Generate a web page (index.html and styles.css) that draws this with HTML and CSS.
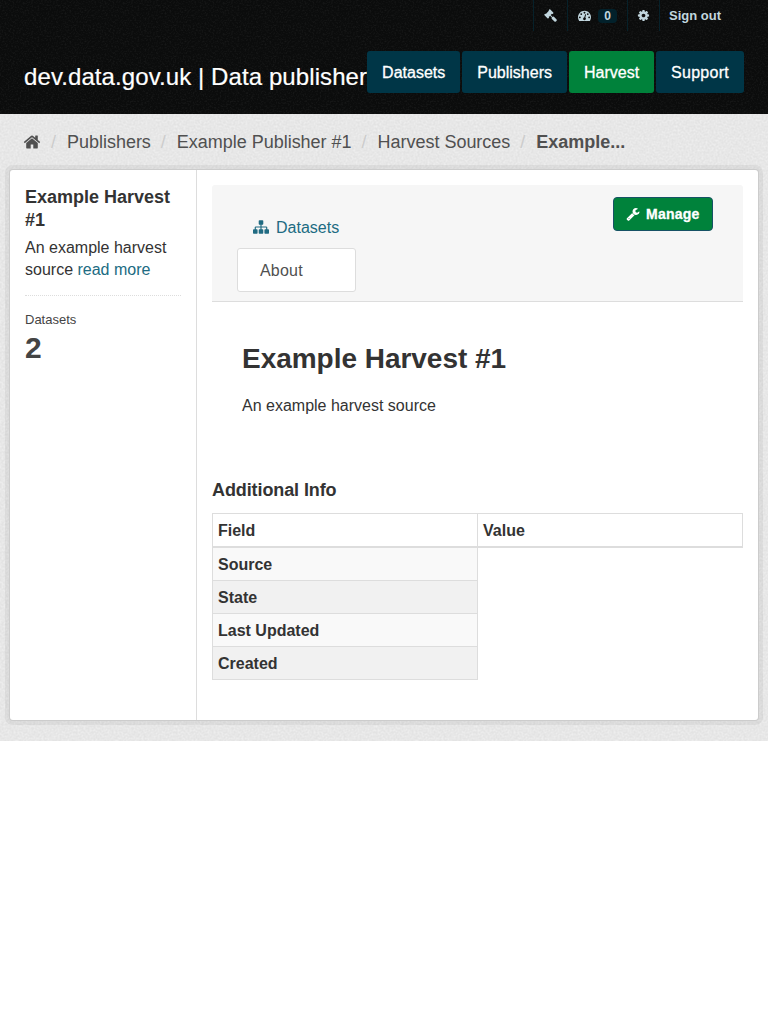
FILE: index.html
```html
<!DOCTYPE html>
<html lang="en">
<head>
<meta charset="utf-8">
<title>Example Harvest #1 - dev.data.gov.uk</title>
<link rel="stylesheet" href="styles.css">
</head>
<body>
<div class="account">
  <ul class="account-list">
    <li><a class="acc-gavel" href="#"><svg class="icon" viewBox="0 0 1792 1792"><path d="M1771 1536q0 53-37 90l-107 108q-39 37-91 37-53 0-90-37l-363-364q-38-36-38-90 0-53 43-96l-256-256-126 126q-14 14-34 14t-34-14q2 2 12.500 12t12.500 13 10 11.500 10 13.500 6 13.500 5.500 16.500 1.500 18q0 38-28 68-3 3-16.500 18t-19 20.500-18.500 16.500-22 15.500-22 9-26 4.500q-40 0-68-28l-408-408q-28-28-28-68 0-13 4.500-26t9-22 15.500-22 16.500-18.500 20.500-19 18-16.500q30-28 68-28 10 0 18 1.500t16.500 5.500 13.500 6 13.500 10 11.500 10 13 12.500 12 12.500q-14-14-14-34t14-34l348-348q14-14 34-14t34 14q-2-2-12.500-12t-12.500-13-10-11.500-10-13.500-6-13.500-5.500-16.500-1.500-18q0-38 28-68 3-3 16.500-18t19-20.500 18.500-16.500 22-15.500 22-9 26-4.500q40 0 68 28l408 408q28 28 28 68 0 13-4.500 26t-9 22-15.500 22-16.500 18.500-20.500 19-18 16.500q-30 28-68 28-10 0-18-1.500t-16.500-5.500-13.500-6-13.500-10-11.500-10-13-12.500-12-12.500q14 14 14 34t-14 34l-126 126 256 256q43-43 96-43 52 0 91 37l363 363q37 39 37 91z"/></svg></a></li>
    <li><a class="acc-dash" href="#"><svg class="icon" viewBox="0 0 1792 1792"><path d="M384 1152q0-53-37.500-90.500t-90.500-37.500-90.500 37.500-37.500 90.500 37.500 90.500 90.500 37.500 90.500-37.500 37.500-90.500zm192-448q0-53-37.500-90.500t-90.500-37.500-90.500 37.500-37.500 90.500 37.500 90.500 90.500 37.500 90.500-37.500 37.500-90.500zm428 481l101-382q6-26-7.500-48.500t-38.500-29.500-48 6.500-30 39.500l-101 382q-60 5-107 43.500t-63 98.500q-20 77 20 146t117 89 146-20 89-117q16-60-6-117t-72-91zm660-33q0-53-37.500-90.500t-90.500-37.500-90.500 37.500-37.500 90.500 37.500 90.500 90.500 37.500 90.500-37.500 37.500-90.500zm-640-640q0-53-37.500-90.500t-90.500-37.500-90.500 37.500-37.500 90.500 37.500 90.500 90.500 37.500 90.500-37.500 37.500-90.500zm448 192q0-53-37.500-90.500t-90.500-37.500-90.500 37.500-37.500 90.500 37.500 90.500 90.500 37.500 90.500-37.500 37.500-90.500zm320 448q0 261-141 483-19 29-54 29h-1402q-35 0-54-29-141-221-141-483 0-182 71-348t191-286 286-191 348-71 348 71 286 191 191 286 71 348z"/></svg><span class="count">0</span></a></li>
    <li><a class="acc-cog" href="#"><svg class="icon" viewBox="0 0 1792 1792"><path d="M1152 896q0-106-75-181t-181-75-181 75-75 181 75 181 181 75 181-75 75-181zm512-109v222q0 12-8 23t-20 13l-185 28q-19 54-39 91 35 50 107 138 10 12 10 25t-9 23q-27 37-99 108t-94 71q-12 0-26-9l-138-108q-44 23-91 38-16 136-29 186-7 28-36 28h-222q-14 0-24.500-8.500t-11.500-21.500l-28-184q-49-16-90-37l-141 107q-10 9-25 9-14 0-25-11-126-114-165-168-7-10-7-23 0-12 8-23 15-21 51-66.500t54-70.500q-27-50-41-99l-183-27q-13-2-21-12.500t-8-23.500v-222q0-12 8-23t19-13l186-28q14-46 39-92-40-57-107-138-10-12-10-24 0-10 9-23 26-36 98.500-107.500t94.500-71.500q13 0 26 10l138 107q44-23 91-38 16-136 29-186 7-28 36-28h222q14 0 24.500 8.500t11.500 21.500l28 184q49 16 90 37l142-107q9-9 24-9 13 0 25 10 129 119 165 170 7 8 7 22 0 12-8 23-15 21-51 66.500t-54 70.500q26 50 41 98l183 28q13 2 21 12.500t8 23.500z"/></svg></a></li>
    <li><a class="acc-out" href="#">Sign out</a></li>
  </ul>
</div>
<header class="masthead">
  <a class="logo" href="#">dev.data.gov.uk | Data publisher</a>
  <nav class="main-nav">
    <a href="#">Datasets</a>
    <a href="#">Publishers</a>
    <a class="active" href="#">Harvest</a>
    <a class="support" href="#">Support</a>
  </nav>
</header>
<main class="main">
  <ol class="breadcrumb">
    <li><a href="#"><svg class="home" viewBox="0 0 1792 1792"><path d="M1472 992v480q0 26-19 45t-45 19h-384v-384h-256v384h-384q-26 0-45-19t-19-45v-480q0-1 .5-3t.5-3l575-474 575 474q1 2 1 6zm223-69l-62 74q-8 9-21 11h-3q-13 0-21-7l-692-577-692 577q-12 8-24 7-13-2-21-11l-62-74q-8-10-7-23.500t11-21.500l719-599q32-26 76-26t76 26l244 204v-195q0-14 9-23t23-9h192q14 0 23 9t9 23v408l219 182q10 8 11 21.500t-7 23.500z"/></svg></a></li>
    <li><a href="#">Publishers</a></li>
    <li><a href="#">Example Publisher #1</a></li>
    <li><a href="#">Harvest Sources</a></li>
    <li class="current"><a href="#">Example...</a></li>
  </ol>
  <div class="wrapper">
    <aside class="secondary">
      <h1 class="side-title">Example Harvest #1</h1>
      <p class="side-text">An example harvest source <a href="#">read more</a></p>
      <dl class="nums"><dt>Datasets</dt><dd>2</dd></dl>
    </aside>
    <div class="primary">
      <header class="page-header">
        <ul class="tabs">
          <li><a href="#"><svg class="icon" viewBox="0 0 1792 1792"><path d="M1792 1248v320q0 40-28 68t-68 28h-320q-40 0-68-28t-28-68v-320q0-40 28-68t68-28h96v-192h-512v192h96q40 0 68 28t28 68v320q0 40-28 68t-68 28h-320q-40 0-68-28t-28-68v-320q0-40 28-68t68-28h96v-192h-512v192h96q40 0 68 28t28 68v320q0 40-28 68t-68 28h-320q-40 0-68-28t-28-68v-320q0-40 28-68t68-28h96v-192q0-52 38-90t90-38h512v-192h-96q-40 0-68-28t-28-68v-320q0-40 28-68t68-28h320q40 0 68 28t28 68v320q0 40-28 68t-68 28h-96v192h512q52 0 90 38t38 90v192h96q40 0 68 28t28 68z"/></svg>Datasets</a></li>
          <li class="active"><a href="#">About</a></li>
        </ul>
        <a class="btn" href="#"><svg class="icon" viewBox="0 0 1792 1792"><path d="M448 1472q0-26-19-45t-45-19-45 19-19 45 19 45 45 19 45-19 19-45zm644-420l-682 682q-37 37-90 37-52 0-91-37l-106-108q-38-36-38-90 0-53 38-91l681-681q39 98 114.500 173.500t173.500 114.500zm634-435q0 39-23 106-47 134-164.500 217.500t-258.500 83.500q-185 0-316.500-131.500t-131.500-316.500 131.500-316.500 316.500-131.500q58 0 121.500 16.500t107.500 46.500q16 11 16 28t-16 28l-293 169v224l193 107q5-3 79-48.500t135.500-81 70.500-35.500q15 0 23.500 10t8.500 25z"/></svg>Manage</a>
      </header>
      <section class="content">
        <h2>Example Harvest #1</h2>
        <p>An example harvest source</p>
      </section>
      <section class="info">
        <h3>Additional Info</h3>
        <table>
          <thead><tr><th>Field</th><th>Value</th></tr></thead>
          <tbody>
            <tr><th>Source</th></tr>
            <tr><th>State</th></tr>
            <tr><th>Last Updated</th></tr>
            <tr><th>Created</th></tr>
          </tbody>
        </table>
      </section>
    </div>
  </div>
</main>
</body>
</html>
```
FILE: styles.css
```css
* { box-sizing: border-box; }
body {
  margin: 0;
  background: #fff;
  color: #333;
  font: 16px/22px "Liberation Sans", Arial, sans-serif;
}
a { color: #206b82; text-decoration: none; }
ul, ol, dl, dd, h1, h2, h3, p { margin: 0; padding: 0; list-style: none; }
svg { display: block; fill: currentColor; }

.account, .masthead {
  background: #0b0c0c url("data:image/svg+xml,%3Csvg xmlns='http://www.w3.org/2000/svg' width='100' height='100'%3E%3Cfilter id='n'%3E%3CfeTurbulence type='fractalNoise' baseFrequency='.6' numOctaves='2' stitchTiles='stitch'/%3E%3CfeColorMatrix values='0 0 0 0 1 0 0 0 0 1 0 0 0 0 1 .13 0 0 0 -.06'/%3E%3C/filter%3E%3Crect width='100' height='100' filter='url(%23n)'/%3E%3C/svg%3E");
}
.account { height: 31px; padding-right: 37px; }
.account-list { display: flex; justify-content: flex-end; }
.account-list li { border-left: 1px solid #06212a; }
.account-list a {
  display: flex;
  align-items: center;
  height: 31px;
  padding: 0 10px;
  color: #c1d6de;
  font-size: 13px;
  font-weight: bold;
}
.account-list .acc-cog { padding: 0 9px; }
.account-list .acc-out { padding-left: 9px; }
.account-list .icon { width: 13px; height: 13px; }
.count {
  margin: 1px 0 0 7px;
  padding: 0 6px;
  border-radius: 4px;
  background: #02212b;
  font-size: 12px;
  line-height: 14px;
}
.masthead {
  display: flex;
  justify-content: space-between;
  height: 83px;
  padding: 20px 24px 0;
}
.logo {
  margin-top: 11px;
  color: #fff;
  font-size: 24px;
  line-height: 30px;
  letter-spacing: .09px;
  white-space: nowrap;
  -webkit-text-stroke: .2px #fff;
}
.main-nav { display: flex; gap: 2px; }
.main-nav a {
  height: 42px;
  padding: 0 15px;
  border-radius: 3px;
  background: #003647;
  color: #fff;
  line-height: 43px;
  -webkit-text-stroke: .3px #fff;
}
.main-nav .active { background: #00823b; }
.main-nav .support { letter-spacing: .27px; }

.main {
  height: 627px;
  padding: 16px 10px 0;
  background: #e3e3e3 url("data:image/svg+xml,%3Csvg xmlns='http://www.w3.org/2000/svg' width='100' height='100'%3E%3Cfilter id='n'%3E%3CfeTurbulence type='fractalNoise' baseFrequency='.5' numOctaves='2' stitchTiles='stitch'/%3E%3CfeColorMatrix values='0 0 0 0 1 0 0 0 0 1 0 0 0 0 1 .8 0 0 0 -.25'/%3E%3C/filter%3E%3Crect width='100' height='100' filter='url(%23n)'/%3E%3C/svg%3E");
}
.breadcrumb { display: flex; height: 40px; padding-left: 14px; font-size: 18px; line-height: 24px; letter-spacing: -.02px; }
.breadcrumb a { color: #505050; }
.breadcrumb li { display: flex; }
.breadcrumb li + li::before { content: "/"; width: 5px; margin: 0 11px 0 10px; color: #ccc; font-weight: normal; }
.breadcrumb .current { font-weight: bold; }
.home { width: 18px; height: 18px; margin: 3px 0 0 -1px; }

.wrapper {
  display: flex;
  height: 550px;
  border-radius: 3px;
  background: #fff;
  box-shadow: 0 0 0 1px #ccc, 0 0 0 5px rgba(0, 0, 0, .05);
}
.secondary { width: 187px; padding: 16px 15px; border-right: 1px solid #ddd; }
.side-title { font-size: 18px; line-height: 23px; }
.side-text { margin-top: 5px; }
.nums { margin-top: 14px; padding-top: 15px; border-top: 1px dotted #ddd; color: #444; }
.nums dt { font-size: 13px; line-height: 18px; }
.nums dd { font-size: 30px; font-weight: bold; line-height: 38px; }

.primary { flex: 1; padding: 15px; }
.page-header {
  display: flex;
  justify-content: space-between;
  height: 117px;
  padding: 12px 30px 0 25px;
  border-bottom: 1px solid #ddd;
  border-radius: 3px 3px 0 0;
  background: #f6f6f6;
}
.tabs { width: 119px; padding-top: 9px; }
.tabs a { display: flex; height: 42px; align-items: center; padding: 2px 0 0 16px; }
.tabs .icon { width: 16px; height: 16px; margin: -2px 7px 0 0; }
.tabs .active a {
  height: 44px;
  padding-left: 22px;
  border: 1px solid #ddd;
  border-radius: 3px;
  background: #fff;
  color: #505050;
  letter-spacing: .2px;
}
.btn {
  display: flex;
  align-items: center;
  width: 100px;
  height: 34px;
  padding-left: 12px;
  border: 1px solid #165265;
  border-radius: 4px;
  background: #00823b;
  color: #fff;
  font-size: 14px;
  font-weight: bold;
  letter-spacing: .25px;
  -webkit-text-stroke: .3px #fff;
}
.btn .icon { width: 14px; height: 14px; margin-right: 6px; }
.content { height: 177px; padding: 38px 30px 0; }
.content h2 { font-size: 28px; line-height: 37px; letter-spacing: -.03px; }
.content p { margin-top: 18px; }
.info h3 { font-size: 18px; line-height: 23px; letter-spacing: -.1px; }
table { width: 100%; margin-top: 11px; border-collapse: collapse; table-layout: fixed; }
th { height: 33px; padding: 1px 5px 0; border: 1px solid #ddd; text-align: left; line-height: 22px; }
thead th { padding-top: 3px; border-bottom-width: 2px; }
tbody th { background: #f9f9f9; }
tbody tr:first-child th { height: 34px; padding-top: 2px; }
tbody tr:nth-child(even) th { background: #f1f1f1; }
```
